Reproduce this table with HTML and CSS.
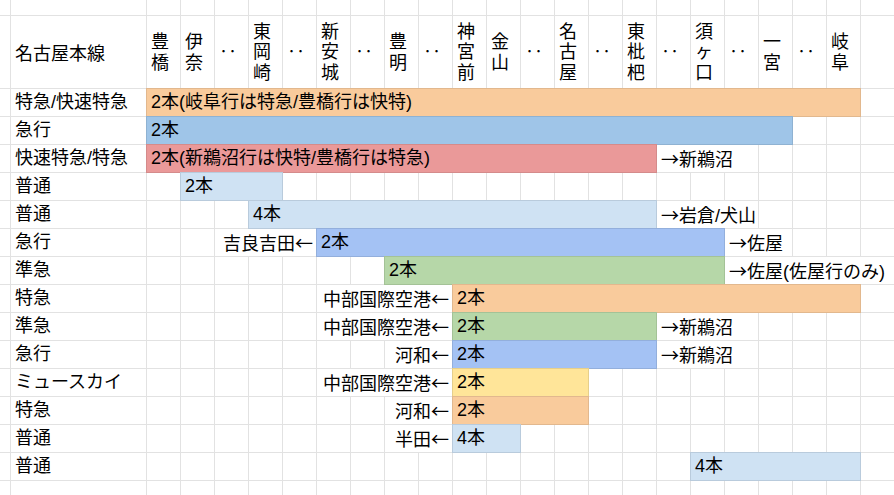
FILE: index.html
```html
<!DOCTYPE html>
<html lang="ja">
<head>
<meta charset="utf-8">
<title>名古屋本線</title>
<link rel="stylesheet" href="styles.css">
</head>
<body>
<div class="sheet">
  <div class="row row-top"></div>
  <div class="row row-head">
    <div class="title">名古屋本線</div>
    <div class="st">豊橋</div>
    <div class="st">伊奈</div>
    <div class="st">‥</div>
    <div class="st">東岡崎</div>
    <div class="st">‥</div>
    <div class="st">新安城</div>
    <div class="st">‥</div>
    <div class="st">豊明</div>
    <div class="st">‥</div>
    <div class="st">神宮前</div>
    <div class="st">金山</div>
    <div class="st">‥</div>
    <div class="st">名古屋</div>
    <div class="st">‥</div>
    <div class="st">東枇杷</div>
    <div class="st">‥</div>
    <div class="st">須ヶ口</div>
    <div class="st">‥</div>
    <div class="st">一宮</div>
    <div class="st">‥</div>
    <div class="st">岐阜</div>
  </div>

  <div class="row">
    <div class="label">特急/快速特急</div>
    <div class="bar orange" style="grid-column: 3 / 24">2本(岐阜行は特急/豊橋行は快特)</div>
  </div>
  <div class="row">
    <div class="label">急行</div>
    <div class="bar blue" style="grid-column: 3 / 22">2本</div>
  </div>
  <div class="row">
    <div class="label">快速特急/特急</div>
    <div class="bar red" style="grid-column: 3 / 18">2本(新鵜沼行は快特/豊橋行は特急)</div>
    <div class="note" style="grid-column: 18 / 21"><span class="arw">→</span>新鵜沼</div>
  </div>
  <div class="row">
    <div class="label">普通</div>
    <div class="bar pale" style="grid-column: 4 / 7">2本</div>
  </div>
  <div class="row">
    <div class="label">普通</div>
    <div class="bar pale" style="grid-column: 6 / 18">4本</div>
    <div class="note" style="grid-column: 18 / 21"><span class="arw">→</span>岩倉/犬山</div>
  </div>
  <div class="row">
    <div class="label">急行</div>
    <div class="note from" style="grid-column: 5 / 8">吉良吉田<span class="arw">←</span></div>
    <div class="bar corn" style="grid-column: 8 / 20">2本</div>
    <div class="note" style="grid-column: 20 / 22"><span class="arw">→</span>佐屋</div>
  </div>
  <div class="row">
    <div class="label">準急</div>
    <div class="bar green" style="grid-column: 10 / 20">2本</div>
    <div class="note" style="grid-column: 20 / 25"><span class="arw">→</span>佐屋(佐屋行のみ)</div>
  </div>
  <div class="row">
    <div class="label">特急</div>
    <div class="note from" style="grid-column: 8 / 12">中部国際空港<span class="arw">←</span></div>
    <div class="bar orange" style="grid-column: 12 / 24">2本</div>
  </div>
  <div class="row">
    <div class="label">準急</div>
    <div class="note from" style="grid-column: 8 / 12">中部国際空港<span class="arw">←</span></div>
    <div class="bar green" style="grid-column: 12 / 18">2本</div>
    <div class="note" style="grid-column: 18 / 21"><span class="arw">→</span>新鵜沼</div>
  </div>
  <div class="row">
    <div class="label">急行</div>
    <div class="note from" style="grid-column: 10 / 12">河和<span class="arw">←</span></div>
    <div class="bar corn" style="grid-column: 12 / 18">2本</div>
    <div class="note" style="grid-column: 18 / 21"><span class="arw">→</span>新鵜沼</div>
  </div>
  <div class="row">
    <div class="label">ミュースカイ</div>
    <div class="note from" style="grid-column: 8 / 12">中部国際空港<span class="arw">←</span></div>
    <div class="bar yellow" style="grid-column: 12 / 16">2本</div>
  </div>
  <div class="row">
    <div class="label">特急</div>
    <div class="note from" style="grid-column: 10 / 12">河和<span class="arw">←</span></div>
    <div class="bar orange" style="grid-column: 12 / 16">2本</div>
  </div>
  <div class="row">
    <div class="label">普通</div>
    <div class="note from" style="grid-column: 10 / 12">半田<span class="arw">←</span></div>
    <div class="bar pale" style="grid-column: 12 / 14">4本</div>
  </div>
  <div class="row">
    <div class="label">普通</div>
    <div class="bar pale" style="grid-column: 19 / 24">4本</div>
  </div>
  <div class="row"></div>
</div>
</body>
</html>
```

FILE: styles.css
```css
html, body {
  margin: 0;
  padding: 0;
  background: #fff;
}

body {
  font-family: "Liberation Sans", "Noto Sans CJK JP", sans-serif;
  font-size: 18px;
  color: #000;
}

.sheet {
  width: 894px;
  height: 495px;
  overflow: hidden;
}

.row {
  display: grid;
  grid-template-columns: 10px 135px repeat(22, 33px);
  column-gap: 1px;
  height: 27px;
  border-bottom: 1px solid #e2e2e2;
  background:
    linear-gradient(#fff, #fff) 11px 0 / 135px 100% no-repeat,
    linear-gradient(to right, #e2e2e2 1px, transparent 1px) 10px 0 / 34px 100% repeat-x,
    #fff;
}

.row-top {
  height: 15px;
}

.row-head {
  height: 72px;
}

.title {
  grid-column: 2;
  align-self: center;
  padding-left: 4px;
  line-height: 22px;
  margin-top: 3px;
  white-space: nowrap;
}

.st {
  align-self: center;
  padding-left: 4px;
  line-height: 20.3px;
  line-break: anywhere;
  word-break: break-all;
  margin-top: 1px;
}

.label,
.bar,
.note {
  line-height: 27px;
  padding: 0 4px;
  white-space: nowrap;
  overflow: hidden;
}

.label {
  grid-column: 2;
}

.note {
  background: #fff;
}

.note.from {
  text-align: right;
  padding-right: 3px;
}

.arw {
  font-family: "Noto Sans CJK JP", sans-serif;
}

.bar {
  background: var(--fill);
  box-shadow: 0 0 0 1px var(--edge);
}

.orange { --fill: #f9cb9c; --edge: #e2b88e; }
.blue   { --fill: #9fc5e8; --edge: #8fb2d2; }
.red    { --fill: #ea9999; --edge: #d48b8b; }
.pale   { --fill: #cfe2f3; --edge: #b9cbdc; }
.corn   { --fill: #a4c2f4; --edge: #93afdc; }
.green  { --fill: #b6d7a8; --edge: #a4c297; }
.yellow { --fill: #ffe599; --edge: #e6cf8b; }
```
